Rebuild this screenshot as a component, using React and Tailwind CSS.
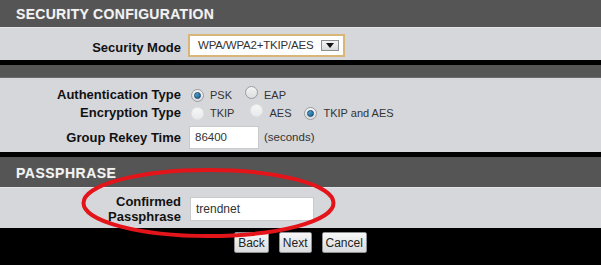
import React from "react";

const font = { fontFamily: '"Liberation Sans", Arial, sans-serif' };

function Radio({ checked, disabled }) {
  if (disabled) {
    return (
      <span className="inline-block w-[13px] h-[13px] rounded-full border border-[#e4e5e8] bg-gradient-to-b from-[#f6f6f6] to-[#e9eaec]" />
    );
  }
  return (
    <span className="relative inline-flex items-center justify-center w-[13px] h-[13px] rounded-full border border-[#9a9ca0] bg-gradient-to-b from-[#f4f4f4] to-[#dcdde0]">
      {checked && (
        <span className="w-[7px] h-[7px] rounded-full bg-gradient-to-br from-[#4fb3e8] to-[#1d5c8c] border border-[#1b4566]" />
      )}
    </span>
  );
}

function Btn({ children }) {
  return (
    <button className="h-[21px] px-[3px] rounded-[2px] border border-[#8f9094] bg-gradient-to-b from-[#f7f7f7] to-[#dadbdd] text-[12px] text-[#222] leading-none">
      {children}
    </button>
  );
}

export default function App() {
  return (
    <div className="relative w-[601px] h-[265px] overflow-hidden bg-black" style={font}>
      {/* Header 1 */}
      <div className="h-[27px] bg-[#555555] flex items-center pl-[16px] pt-[1px]">
        <span className="text-[14px] font-bold text-[#f2f2f2] tracking-[0.3px] [text-shadow:0_0_1px_#888]">
          SECURITY CONFIGURATION
        </span>
      </div>
      {/* Security mode row */}
      <div className="h-[33px] bg-[#d6d7db] border-t border-[#e4e5e8] flex pt-[6px]">
        <div className="w-[181px] text-right text-[13px] font-bold text-[#111] pt-[4px]">
          Security Mode
        </div>
        <div className="ml-[7px] w-[157px] h-[23px] border-2 border-[#d8b678] bg-white flex items-center pl-[8px] pr-[4px]">
          <span className="text-[11.5px] tracking-[-0.2px] text-[#333] flex-1 whitespace-nowrap">WPA/WPA2+TKIP/AES</span>
          <span className="w-[18px] h-[11px] border border-[#8c8d90] bg-gradient-to-b from-[#f4f4f4] to-[#d9dadc] flex items-center justify-center">
            <svg width="8" height="5" viewBox="0 0 8 5"><path d="M0 0H8L4 5Z" fill="#111" /></svg>
          </span>
        </div>
      </div>
      <div className="h-[5px] bg-black" />
      <div className="h-[13px] bg-[#555555] border-b border-[#6a6a6a]" />
      {/* Options */}
      <div className="h-[74px] bg-[#d6d7db] pt-[8px]">
        <div className="h-[18px] flex items-center">
          <div className="w-[181px] text-right text-[13px] font-bold text-[#111]">Authentication Type</div>
          <div className="ml-[10px] flex items-center text-[11px] text-[#333]">
            <Radio checked />
            <span className="ml-[6px]">PSK</span>
            <span className="ml-[13px]"><Radio /></span>
            <span className="ml-[6px]">EAP</span>
          </div>
        </div>
        <div className="h-[18px] flex items-center">
          <div className="w-[181px] text-right text-[13px] font-bold text-[#111]">Encryption Type</div>
          <div className="ml-[10px] flex items-center text-[11px] text-[#333]">
            <Radio disabled />
            <span className="ml-[6px]">TKIP</span>
            <span className="ml-[16px]"><Radio disabled /></span>
            <span className="ml-[6px]">AES</span>
            <span className="ml-[13px]"><Radio checked /></span>
            <span className="ml-[6px]">TKIP and AES</span>
          </div>
        </div>
        <div className="mt-[4px] h-[23px] flex items-center">
          <div className="w-[181px] text-right text-[13px] font-bold text-[#111]">Group Rekey Time</div>
          <div className="ml-[8px] w-[70px] h-[23px] bg-white border border-[#c9cacc] flex items-center pl-[5px] text-[11.5px] text-[#333]">
            86400
          </div>
          <span className="ml-[5px] text-[11.5px] text-[#333]">(seconds)</span>
        </div>
      </div>
      <div className="h-[5px] bg-black" />
      {/* Header 2 */}
      <div className="h-[30px] bg-[#555555] flex items-center pl-[16px] pt-[2px]">
        <span className="text-[14px] font-bold text-[#f2f2f2] tracking-[0.5px] [text-shadow:0_0_1px_#888]">
          PASSPHRASE
        </span>
      </div>
      {/* Passphrase row */}
      <div className="h-[41px] bg-[#d6d7db] border-t border-[#e4e5e8] flex items-center pt-[2px]">
        <div className="w-[181px] text-right text-[13px] font-bold text-[#111] leading-[15px]">
          Confirmed
          <br />
          Passphrase
        </div>
        <div className="ml-[9px] w-[124px] h-[24px] bg-white border border-[#c9cacc] flex items-center pl-[5px] text-[12px] text-[#333]">
          trendnet
        </div>
      </div>
      {/* Buttons */}
      <div className="flex justify-center gap-[10px] pt-[4px]">
        <Btn>Back</Btn>
        <Btn>Next</Btn>
        <Btn>Cancel</Btn>
      </div>
      {/* Red ellipse annotation */}
      <svg className="absolute left-0 top-0 pointer-events-none" width="601" height="265">
        <ellipse cx="208.5" cy="203" rx="125" ry="33" fill="none" stroke="#e3151a" strokeWidth="4" />
      </svg>
    </div>
  );
}
